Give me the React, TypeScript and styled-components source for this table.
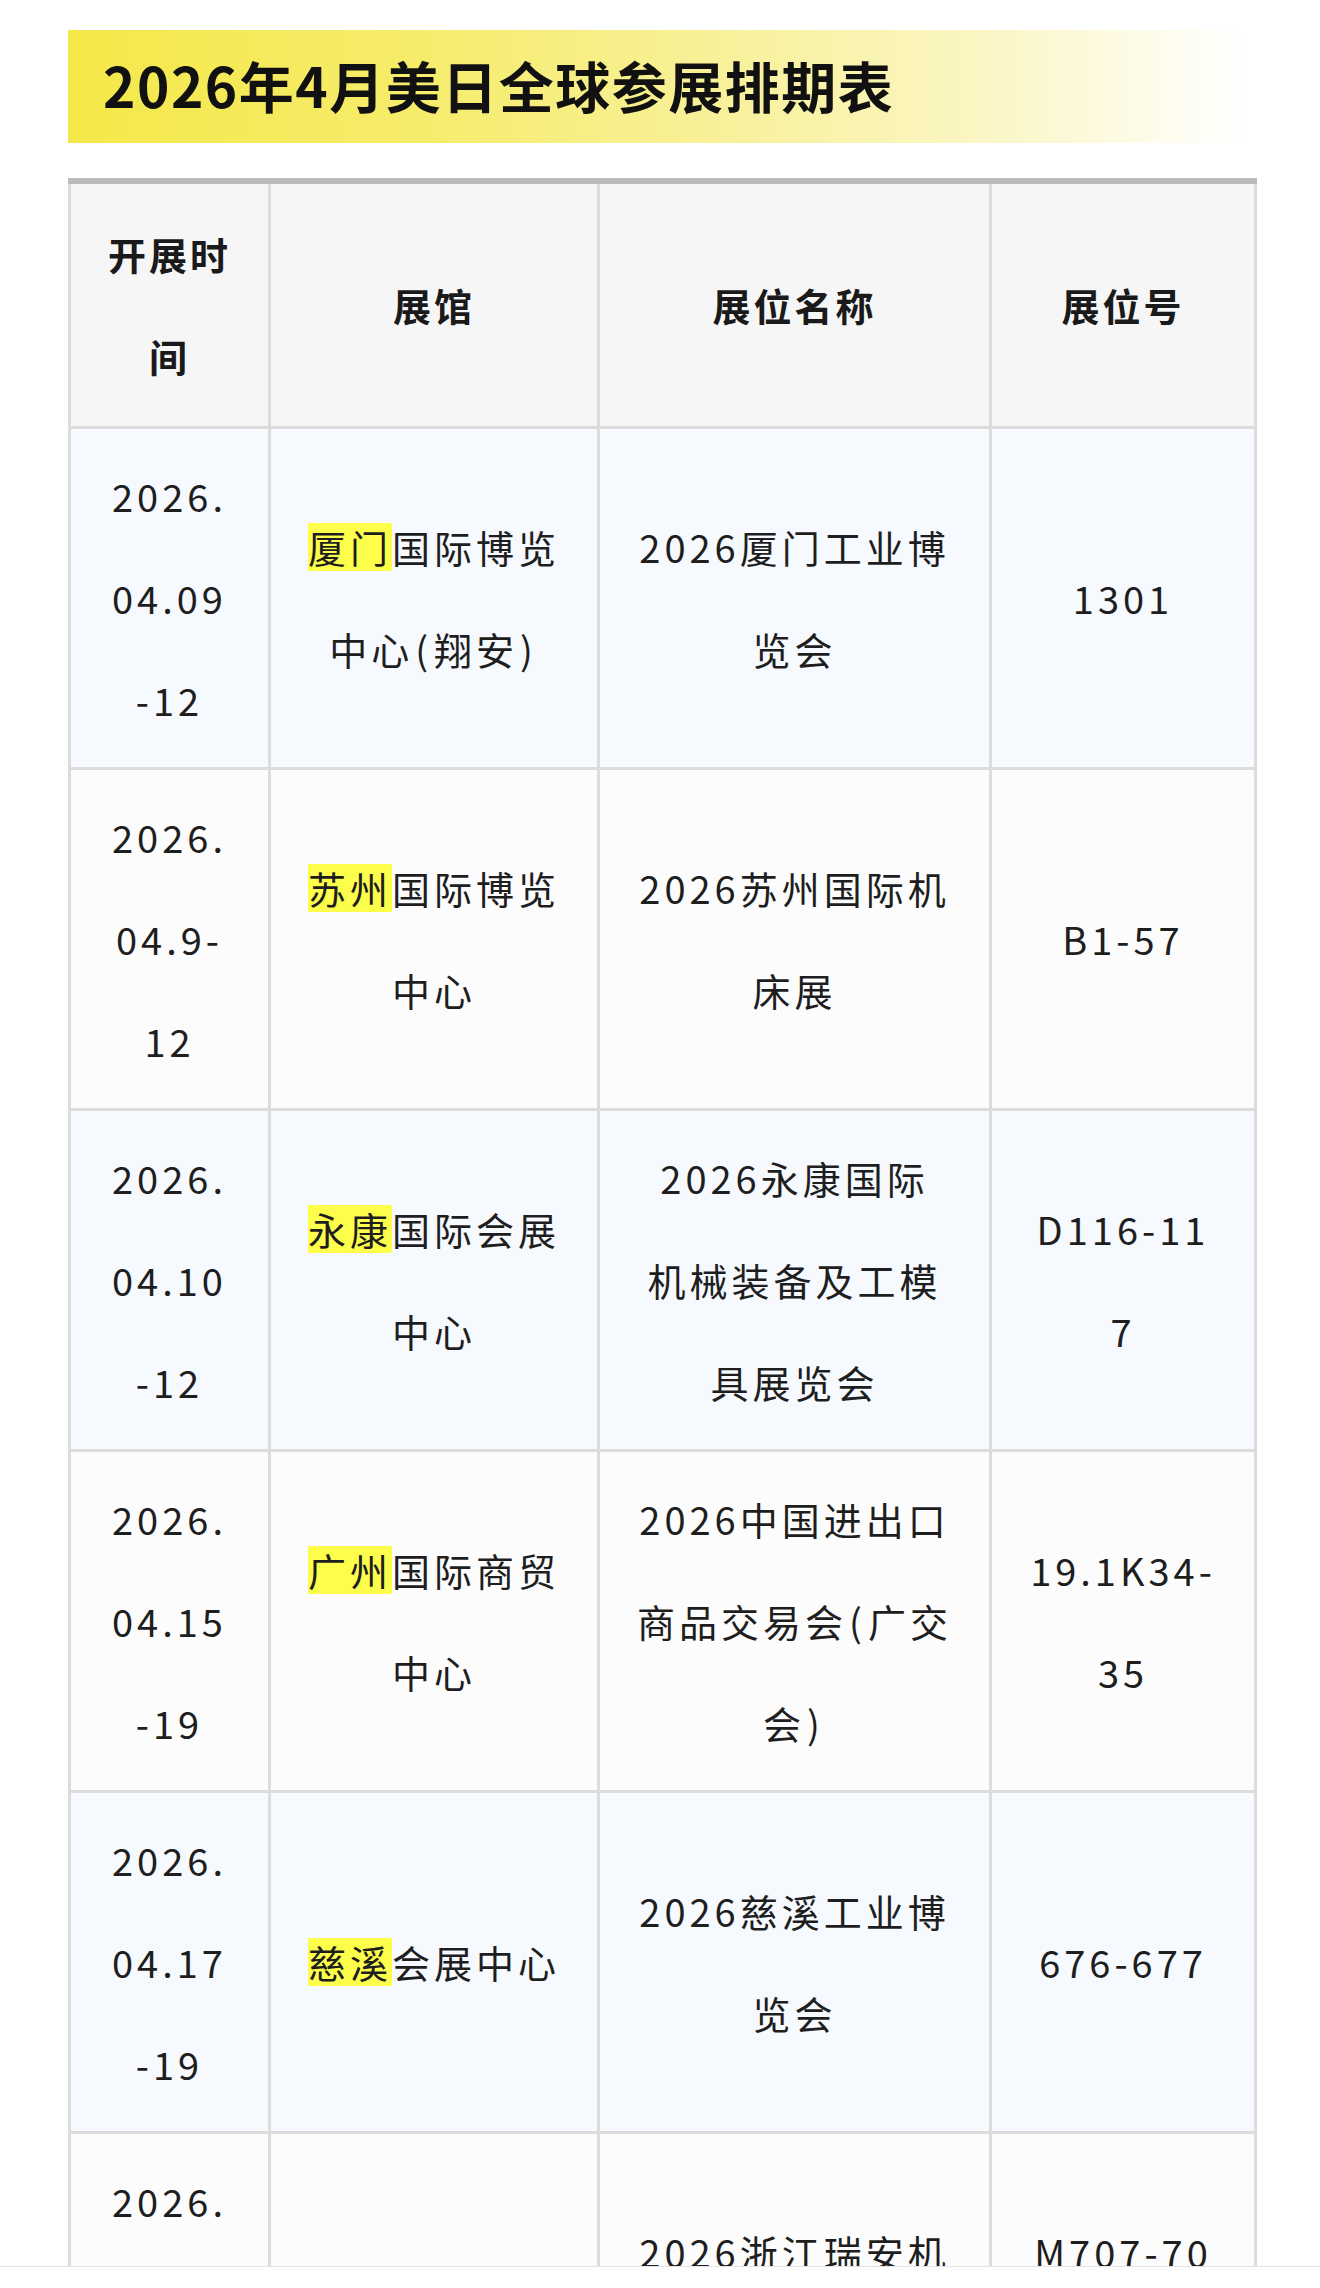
import React from "react";
import styled, { createGlobalStyle } from "styled-components";

// ---------------- Global ----------------

const GlobalStyle = createGlobalStyle`
  body {
    margin: 0;
    background: #ffffff;
    font-family: "Noto Sans CJK SC", "Noto Sans", sans-serif;
    color: #1e1e1e;
  }
`;

// ---------------- Styled Components ----------------

const Page = styled.div`
  width: 1186px;
  padding: 30px 0 120px 68px;
`;

const Banner = styled.div`
  height: 113px;
  box-sizing: border-box;
  display: flex;
  align-items: center;
  padding: 0 0 6px 35px;
  background: linear-gradient(
    90deg,
    #f5e84a 0%,
    #f6ec6c 30%,
    #f8f19a 55%,
    #fbf6c6 78%,
    #ffffff 99%
  );
`;

const Title = styled.h1`
  margin: 0;
  font-size: 55px;
  font-weight: 700;
  letter-spacing: 1.5px;
  color: #111111;
`;

const Table = styled.table`
  margin-top: 35px;
  width: 1186px;
  table-layout: fixed;
  border-collapse: collapse;
  border-top: 6px solid #bbbbbb;
`;

const Th = styled.th`
  border: 3px solid #dcdcdc;
  border-top: 6px solid #bbbbbb;
  background: #f6f6f6;
  padding: 19px 20px;
  font-size: 38px;
  font-weight: 700;
  line-height: 102px;
  letter-spacing: 3px;
  color: #1a1a1a;
  text-align: center;
  vertical-align: middle;
  white-space: nowrap;
`;

const Tr = styled.tr<{ $striped: boolean }>`
  background: ${({ $striped }) => ($striped ? "#f6f9fe" : "#fcfcfc")};
`;

const Td = styled.td`
  border: 3px solid #dcdcdc;
  padding: 16px 20px;
  font-size: 38px;
  font-weight: 400;
  line-height: 102px;
  letter-spacing: 4px;
  color: #1e1e1e;
  text-align: center;
  vertical-align: middle;
  white-space: nowrap;
`;

const Mark = styled.span`
  display: inline-block;
  line-height: 48px;
  background: #fdfd4c;
`;

const Paren = styled.span`
  margin: 0 2px;
`;

const BottomBar = styled.div`
  position: fixed;
  left: 0;
  right: 0;
  bottom: 0;
  height: 21px;
  background: #ffffff;
  border-top: 1px solid #e4e4e4;
`;

// ---------------- Data ----------------

interface Expo {
  date: string[];
  city: string;
  venue: string[];
  name: string[];
  booth: string[];
}

const expos: Expo[] = [
  {
    date: ["2026.", "04.09", "-12"],
    city: "厦门",
    venue: ["国际博览", "中心(翔安)"],
    name: ["2026厦门工业博", "览会"],
    booth: ["1301"],
  },
  {
    date: ["2026.", "04.9-", "12"],
    city: "苏州",
    venue: ["国际博览", "中心"],
    name: ["2026苏州国际机", "床展"],
    booth: ["B1-57"],
  },
  {
    date: ["2026.", "04.10", "-12"],
    city: "永康",
    venue: ["国际会展", "中心"],
    name: ["2026永康国际", "机械装备及工模", "具展览会"],
    booth: ["D116-11", "7"],
  },
  {
    date: ["2026.", "04.15", "-19"],
    city: "广州",
    venue: ["国际商贸", "中心"],
    name: ["2026中国进出口", "商品交易会(广交", "会)"],
    booth: ["19.1K34-", "35"],
  },
  {
    date: ["2026.", "04.17", "-19"],
    city: "慈溪",
    venue: ["会展中心"],
    name: ["2026慈溪工业博", "览会"],
    booth: ["676-677"],
  },
  {
    date: ["2026.", "04.18", "-20"],
    city: "瑞安",
    venue: ["会展中心"],
    name: ["2026浙江瑞安机", "械展览会"],
    booth: ["M707-70", "8"],
  },
];

const renderLine = (line: string) =>
  line.split(/([()])/).map((part, i) =>
    part === "(" || part === ")" ? <Paren key={i}>{part}</Paren> : part
  );

const Lines: React.FC<{ lines: string[] }> = ({ lines }) => (
  <>
    {lines.map((l, i) => (
      <React.Fragment key={i}>
        {i > 0 && <br />}
        {renderLine(l)}
      </React.Fragment>
    ))}
  </>
);

// ---------------- Component ----------------

const App: React.FC = () => {
  return (
    <>
      <GlobalStyle />
      <Page>
        <Banner>
          <Title>2026年4月美日全球参展排期表</Title>
        </Banner>
        <Table>
          <colgroup>
            <col style={{ width: 200 }} />
            <col style={{ width: 329 }} />
            <col style={{ width: 392 }} />
            <col style={{ width: 265 }} />
          </colgroup>
          <thead>
            <tr>
              <Th>
                <Lines lines={["开展时", "间"]} />
              </Th>
              <Th>展馆</Th>
              <Th>展位名称</Th>
              <Th>展位号</Th>
            </tr>
          </thead>
          <tbody>
            {expos.map((e, i) => (
              <Tr key={i} $striped={i % 2 === 0}>
                <Td>
                  <Lines lines={e.date} />
                </Td>
                <Td>
                  <Mark>{e.city}</Mark>
                  <Lines lines={e.venue} />
                </Td>
                <Td>
                  <Lines lines={e.name} />
                </Td>
                <Td>
                  <Lines lines={e.booth} />
                </Td>
              </Tr>
            ))}
          </tbody>
        </Table>
      </Page>
      <BottomBar />
    </>
  );
};

export default App;
